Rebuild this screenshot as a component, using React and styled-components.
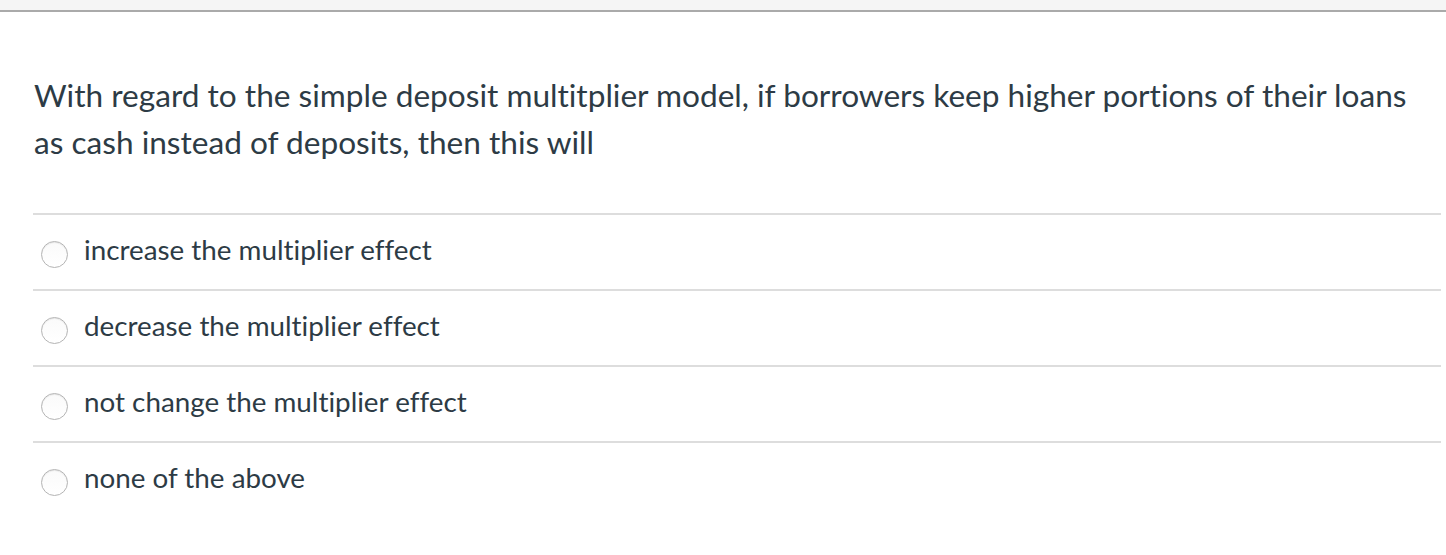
import React from "react";
import styled, { createGlobalStyle } from "styled-components";

const Global = createGlobalStyle`
  html, body { margin: 0; padding: 0; background: #fff; }
  body {
    font-family: Lato, "Open Sans", sans-serif;
    color: #2d3b45;
    font-variant-ligatures: none;
  }
`;

const TopBar = styled.div`
  height: 10px;
  background: #f5f5f5;
  border-bottom: 2px solid #aaaaaa;
`;

const Wrap = styled.div`
  margin: 0 5px 0 33px;
  padding-top: 60px;
`;

const Question = styled.p`
  margin: 0 0 47px 1px;
  font-size: 31.6px;
  line-height: 47px;
`;

const List = styled.div`
  display: flex;
  flex-direction: column;
`;

const Row = styled.label`
  display: flex;
  align-items: center;
  height: 74px;
  border-top: 2px solid #dddddd;
  padding-left: 8px;
  gap: 16px;
  font-size: 27.8px;
`;

const Radio = styled.span`
  width: 25px;
  height: 25px;
  border-radius: 50%;
  border: 1px solid #b4b4b4;
  background: linear-gradient(#fafafa, #ffffff);
  box-shadow: inset 0 1px 1px rgba(0,0,0,0.08);
  flex: none;
  margin-top: 5px;
`;

const Text = styled.span`
  margin-bottom: 6px;
`;

const options = [
  "increase the multiplier effect",
  "decrease the multiplier effect",
  "not change the multiplier effect",
  "none of the above",
];

export default function App() {
  return (
    <>
      <Global />
      <TopBar />
      <Wrap>
        <Question>
          With regard to the simple deposit multitplier model, if borrowers keep higher portions of their loans as cash instead of deposits, then this will
        </Question>
        <List>
          {options.map((o) => (
            <Row key={o}>
              <Radio />
              <Text>{o}</Text>
            </Row>
          ))}
        </List>
      </Wrap>
    </>
  );
}
